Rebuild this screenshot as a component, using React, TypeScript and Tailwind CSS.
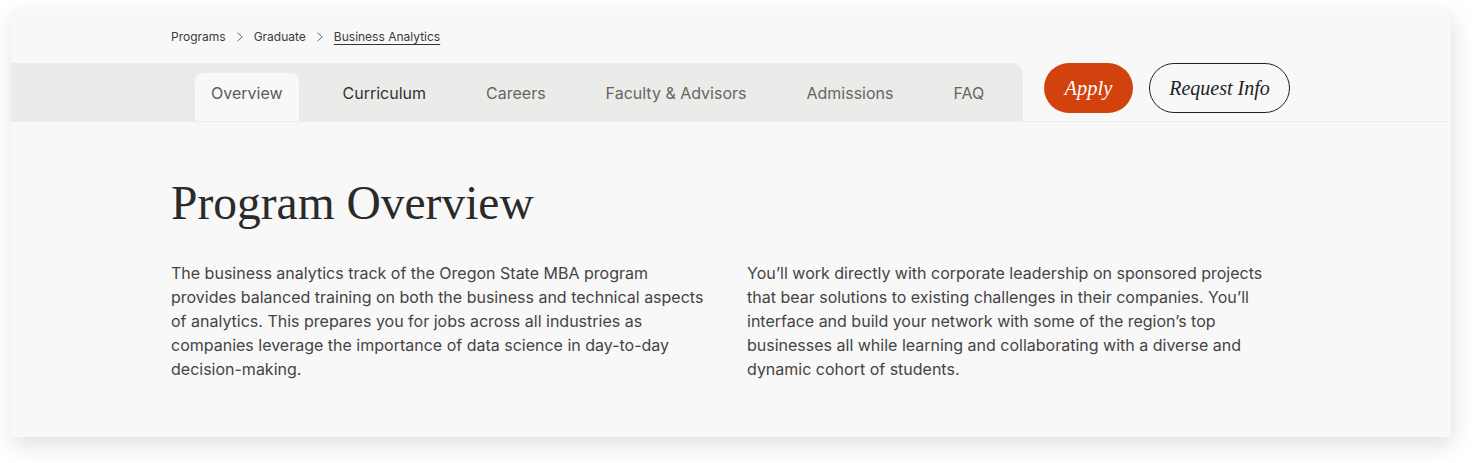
const tabs = ["Overview", "Curriculum", "Careers", "Faculty & Advisors", "Admissions", "FAQ"];

const serif = "font-['Liberation_Serif',Georgia,serif]";

function Chevron() {
  return (
    <svg width="8" height="10" viewBox="0 0 8 10" fill="none" className="text-[#6b6b6b]">
      <path d="M1.5 0.8 L6.2 5 L1.5 9.2" stroke="currentColor" strokeWidth="1" />
    </svg>
  );
}

export default function App() {
  return (
    <div className="min-h-[463px] bg-white pt-[10px] pl-[11px] font-['Inter',sans-serif]">
      <div className="w-[1440px] h-[427px] bg-[#f8f8f8] shadow-[2px_8px_22px_rgba(0,0,0,0.13)]">
        {/* breadcrumbs */}
        <nav className="h-[53px] pl-[160px] flex items-center gap-[10px] text-[12px] text-[#3b3b3b]">
          <span>Programs</span>
          <Chevron />
          <span>Graduate</span>
          <Chevron />
          <span className="underline underline-offset-[3px] decoration-[#333]">Business Analytics</span>
        </nav>

        {/* tabs + actions */}
        <div className="flex items-start border-b border-[#ececec]">
          <div className="w-[1012px] h-[58px] bg-[#ebebe9] rounded-tr-xl pl-[184px] flex items-end gap-7">
            {tabs.map((t, i) => (
              <div
                key={t}
                className={
                  "h-[48px] px-4 pb-2 flex items-center text-[16px] " +
                  (i === 0
                    ? "bg-[#f8f8f8] rounded-t-lg text-[#5c5c58]"
                    : i === 1
                    ? "text-[#333331]"
                    : "text-[#66665f]")
                }
              >
                {t}
              </div>
            ))}
          </div>
          <div className="ml-[21px] flex gap-4">
            <button className={`w-[89px] h-[50px] rounded-full bg-[#d1420e] text-white italic text-[20.5px] flex items-center justify-center ${serif}`}>
              Apply
            </button>
            <button className={`w-[141px] h-[50px] rounded-full border border-[#222] text-[#222] italic text-[20px] flex items-center justify-center ${serif}`}>
              Request Info
            </button>
          </div>
        </div>

        {/* content */}
        <div className="pl-[160px]">
          <h1 className={`mt-[58px] text-[47.5px] leading-none text-[#2a2a2a] ${serif}`}>Program Overview</h1>
          <div className="mt-[33px] grid grid-cols-[536px_536px] gap-x-10 text-[16px] leading-6 text-[#444]">
            <p>
              The business analytics track of the Oregon State MBA program provides balanced training on both the
              business and technical aspects of analytics. This prepares you for jobs across all industries as
              companies leverage the importance of data science in day-to-day decision-making.
            </p>
            <p>
              You’ll work directly with corporate leadership on sponsored projects that bear solutions to existing
              challenges in their companies. You’ll interface and build your network with some of the region’s top
              businesses all while learning and collaborating with a diverse and dynamic cohort of students.
            </p>
          </div>
        </div>
      </div>
    </div>
  );
}
